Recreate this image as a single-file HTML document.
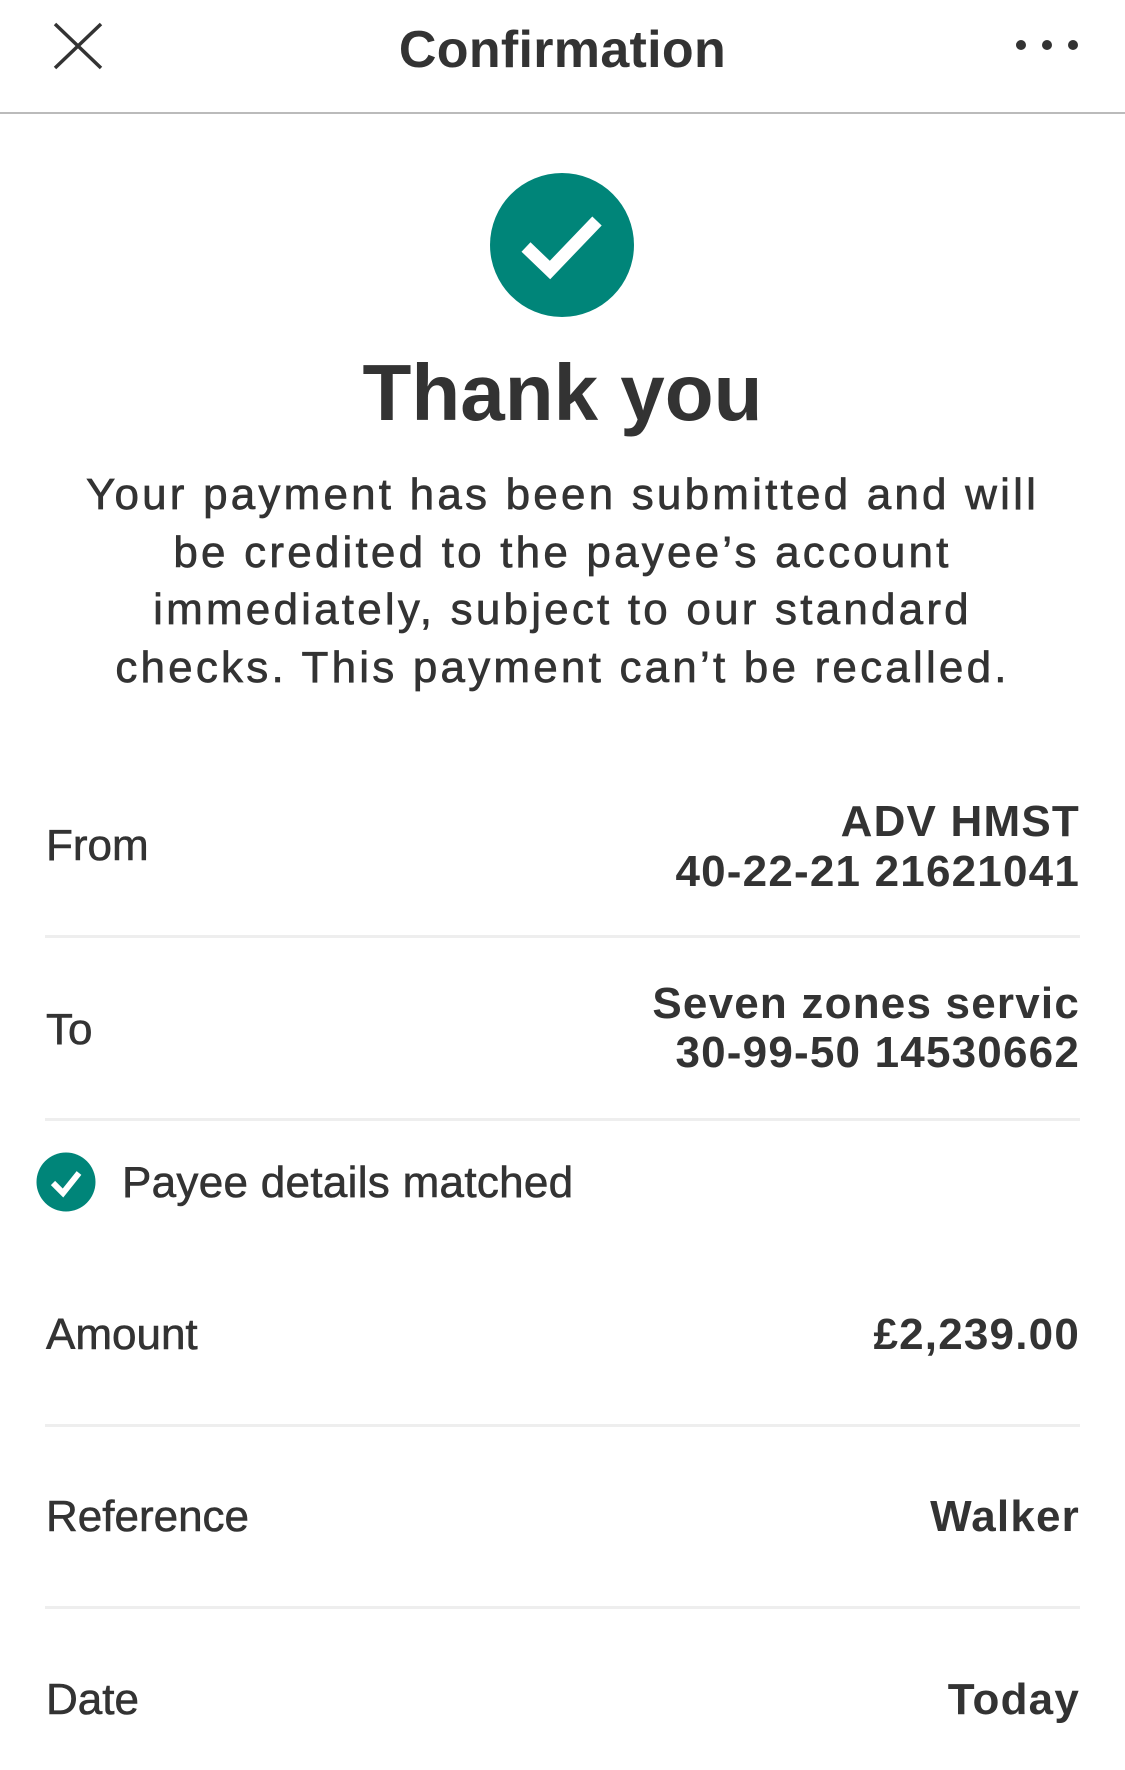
<!DOCTYPE html>
<html><head><meta charset="utf-8"><style>
*{margin:0;padding:0}
body{width:1125px;height:1770px;background:#fff;position:relative;overflow:hidden;font-family:"Liberation Sans",sans-serif;color:#333}
.a{position:absolute;white-space:nowrap}
.l{left:46px;font-size:44px;line-height:44px;-webkit-text-stroke:0.6px #333}
.r{right:45px;font-size:44px;line-height:44px;font-weight:bold;text-align:right;letter-spacing:1.2px}
.hr{position:absolute;left:45px;width:1035px;height:3px;background:#eee}
</style></head><body>
<svg class="a" style="left:52px;top:21px" width="52" height="50"><path d="M3 3L49 47M49 3L3 47" stroke="#333" stroke-width="3.5"/></svg>
<div class="a" style="left:0;width:1125px;text-align:center;top:24px;font-size:52px;line-height:52px;font-weight:bold;letter-spacing:0.3px">Confirmation</div>
<svg class="a" style="left:1010px;top:36px" width="75" height="18"><circle cx="11" cy="9" r="5" fill="#333"/><circle cx="37" cy="9" r="5" fill="#333"/><circle cx="63" cy="9" r="5" fill="#333"/></svg>
<div class="a" style="left:0;top:112px;width:1125px;height:2px;background:#bbb"></div>
<svg class="a" style="left:490px;top:173px" width="144" height="144"><circle cx="72" cy="72" r="72" fill="#008579"/><path d="M36 74L60 97L107 48" stroke="#fff" stroke-width="13" fill="none"/></svg>
<div class="a" style="left:0;width:1125px;text-align:center;top:353px;font-size:80px;line-height:80px;font-weight:bold">Thank you</div>
<div class="a" style="left:0;width:1125px;text-align:center;top:466px;font-size:44px;line-height:57.5px;letter-spacing:3.2px;-webkit-text-stroke:0.7px #333">Your payment has been submitted and will<br>be credited to the payee’s account<br>immediately, subject to our standard<br>checks. This payment can’t be recalled.</div>
<div class="a l" style="top:824px">From</div>
<div class="a r" style="top:800px">ADV HMST</div>
<div class="a r" style="top:850px">40-22-21 21621041</div>
<div class="hr" style="top:935px"></div>
<div class="a l" style="top:1008px">To</div>
<div class="a r" style="top:982px">Seven zones servic</div>
<div class="a r" style="top:1031px">30-99-50 14530662</div>
<div class="hr" style="top:1118px"></div>
<svg class="a" style="left:36px;top:1152px" width="60" height="60"><circle cx="30" cy="30" r="29.5" fill="#008579"/><path d="M17 31L27 41L43 21" stroke="#fff" stroke-width="6" fill="none"/></svg>
<div class="a" style="left:122px;top:1161px;font-size:44px;line-height:44px;letter-spacing:0.3px;-webkit-text-stroke:0.6px #333">Payee details matched</div>
<div class="a l" style="top:1313px">Amount</div>
<div class="a r" style="top:1313px">£2,239.00</div>
<div class="hr" style="top:1424px"></div>
<div class="a l" style="top:1495px">Reference</div>
<div class="a r" style="top:1495px">Walker</div>
<div class="hr" style="top:1606px"></div>
<div class="a l" style="top:1678px">Date</div>
<div class="a r" style="top:1678px">Today</div>
</body></html>
